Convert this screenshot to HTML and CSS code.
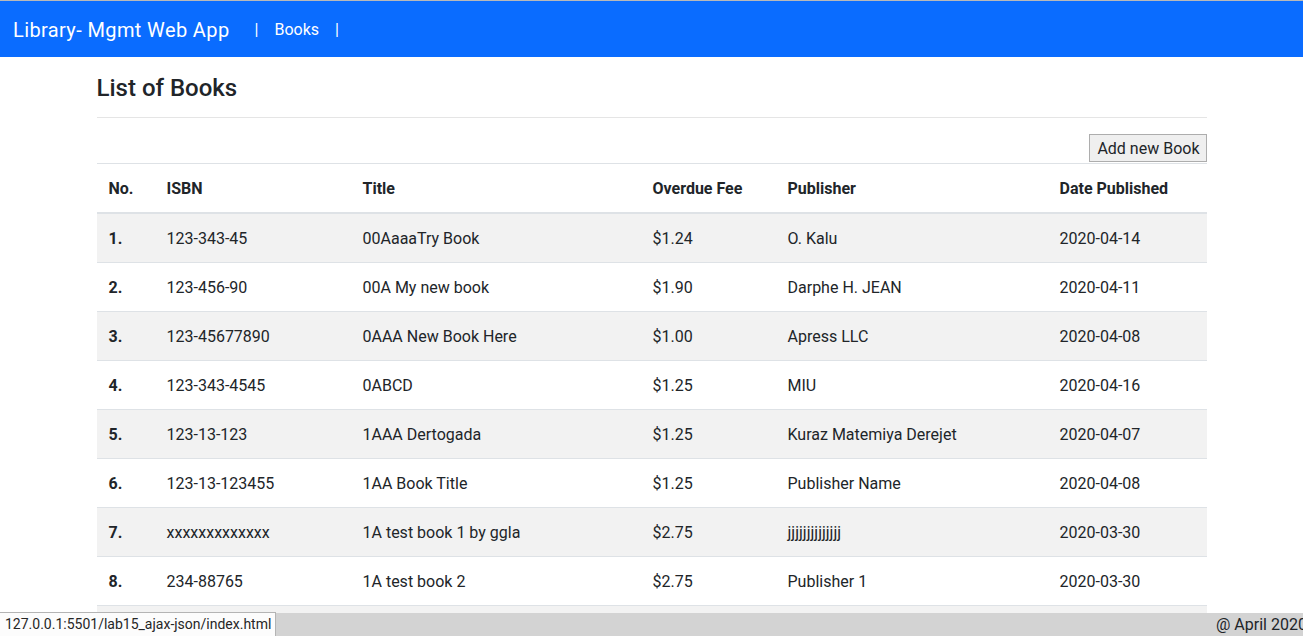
FILE: index.html
```html
<!DOCTYPE html>
<html lang="en">
<head>
<meta charset="utf-8">
<title>Library- Mgmt Web App</title>
<link rel="stylesheet" href="styles.css">
</head>
<body>
<nav class="navbar">
  <span class="brand">Library- Mgmt Web App</span>
  <span class="sep">|</span>
  <a class="nav-link" href="#">Books</a>
  <span class="sep">|</span>
</nav>
<main class="container">
  <h4 class="page-title">List of Books</h4>
  <hr class="rule">
  <div class="actions"><button class="add-btn">Add new Book</button></div>
  <table class="books">
    <colgroup>
      <col class="c1"><col class="c2"><col class="c3"><col class="c4"><col class="c5"><col class="c6">
    </colgroup>
    <thead>
      <tr><th>No.</th><th>ISBN</th><th>Title</th><th>Overdue Fee</th><th>Publisher</th><th>Date Published</th></tr>
    </thead>
    <tbody>
      <tr><th>1.</th><td>123-343-45</td><td>00AaaaTry Book</td><td>$1.24</td><td>O. Kalu</td><td>2020-04-14</td></tr>
      <tr><th>2.</th><td>123-456-90</td><td>00A My new book</td><td>$1.90</td><td>Darphe H. JEAN</td><td>2020-04-11</td></tr>
      <tr><th>3.</th><td>123-45677890</td><td>0AAA New Book Here</td><td>$1.00</td><td>Apress LLC</td><td>2020-04-08</td></tr>
      <tr><th>4.</th><td>123-343-4545</td><td>0ABCD</td><td>$1.25</td><td>MIU</td><td>2020-04-16</td></tr>
      <tr><th>5.</th><td>123-13-123</td><td>1AAA Dertogada</td><td>$1.25</td><td>Kuraz Matemiya Derejet</td><td>2020-04-07</td></tr>
      <tr><th>6.</th><td>123-13-123455</td><td>1AA Book Title</td><td>$1.25</td><td>Publisher Name</td><td>2020-04-08</td></tr>
      <tr><th>7.</th><td>xxxxxxxxxxxxx</td><td>1A test book 1 by ggla</td><td>$2.75</td><td>jjjjjjjjjjjjjj</td><td>2020-03-30</td></tr>
      <tr><th>8.</th><td>234-88765</td><td>1A test book 2</td><td>$2.75</td><td>Publisher 1</td><td>2020-03-30</td></tr>
      <tr class="hidden-row"><th>&nbsp;</th><td>&nbsp;</td><td>&nbsp;</td><td>&nbsp;</td><td>&nbsp;</td><td>&nbsp;</td></tr>
    </tbody>
  </table>
</main>
<footer class="footer"><span class="footer-text">@ April 2020</span></footer>
<div class="status">127.0.0.1:5501/lab15_ajax-json/index.html</div>
</body>
</html>
```
FILE: styles.css
```css
* { box-sizing: border-box; }
html, body { margin: 0; padding: 0; }
body {
  font-family: Roboto, "Liberation Sans", sans-serif;
  font-size: 16px;
  line-height: 1.5;
  color: #212529;
  background: #fff;
  border-top: 1px solid #b9b9b9;
  overflow: hidden;
  height: 636px;
}
.navbar {
  display: flex;
  align-items: center;
  height: 56px;
  background: #0a6cff;
  padding: 1px 13px 0;
  color: #fff;
}
.brand { font-size: 20px; letter-spacing: 0.38px; margin-right: 25px; }
.sep { font-size: 16px; }
.nav-link { color: #fff; text-decoration: none; margin: 0 16px 0 16px; font-size: 16px; }
.container { width: 1110px; margin: 0 auto; }
.page-title {
  font-size: 24px;
  font-weight: 500;
  line-height: 1.2;
  margin: 0;
  padding-top: 17px;
}
.rule { border: 0; border-top: 1px solid #e5e5e5; margin: 14px 0 16px; }
.actions { display: flex; justify-content: flex-end; }
.add-btn {
  font: inherit;
  font-size: 16px;
  line-height: 20px;
  padding: 4px 6px 2px 7px;
  color: #212529;
  background: #efefef;
  border: 1px solid #adadad;
  border-radius: 0;
  margin-top: 0;
}
.books { width: 100%; border-collapse: collapse; margin-top: 1px; }
.c1 { width: 58px; }
.c2 { width: 196px; }
.c3 { width: 290px; }
.c4 { width: 135px; }
.c5 { width: 272px; }
.c6 { width: 159px; }
.books th, .books td {
  padding: 13px 12px 11px;
  text-align: left;
  vertical-align: top;
  border-top: 1px solid #dee2e6;
  white-space: nowrap;
}
.books th { font-weight: 700; }
.books thead th { border-bottom: 2px solid #dee2e6; }
.books tbody tr:nth-child(odd) { background: #f2f2f2; }
.footer {
  position: fixed;
  left: 0;
  right: 0;
  bottom: 0;
  height: 23px;
  background: #d3d3d3;
  overflow: hidden;
  white-space: nowrap;
  padding-left: 1216px;
  font-size: 16px;
  line-height: 24px;
  color: #212529;
}
.status {
  position: fixed;
  left: 0;
  bottom: 0;
  height: 24px;
  padding: 0 4px 0 5px;
  background: #fcfcfc;
  border: 1px solid #b4b4b4;
  border-left: 0;
  border-bottom: 0;
  font-size: 14px;
  line-height: 22px;
  color: #262626;
}
```
